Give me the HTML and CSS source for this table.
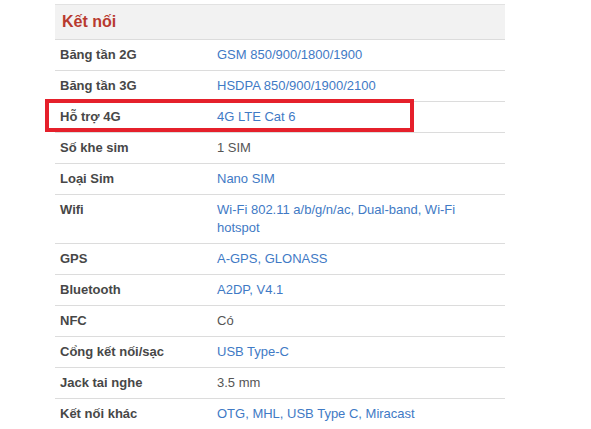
FILE: index.html
```html
<!DOCTYPE html>
<html lang="vi">
<head>
<meta charset="utf-8">
<link rel="stylesheet" href="styles.css">
</head>
<body>
<div class="wrap">
  <table class="specs">
    <colgroup><col class="c1"><col class="c2"></colgroup>
    <thead>
      <tr><th colspan="2" class="head">Kết nối</th></tr>
    </thead>
    <tbody>
      <tr><td class="lbl">Băng tần 2G</td><td class="val link">GSM 850/900/1800/1900</td></tr>
      <tr><td class="lbl">Băng tần 3G</td><td class="val link">HSDPA 850/900/1900/2100</td></tr>
      <tr class="hl"><td class="lbl">Hỗ trợ 4G</td><td class="val link">4G LTE Cat 6</td></tr>
      <tr><td class="lbl">Số khe sim</td><td class="val">1 SIM</td></tr>
      <tr><td class="lbl">Loại Sim</td><td class="val link">Nano SIM</td></tr>
      <tr><td class="lbl">Wifi</td><td class="val link">Wi-Fi 802.11 a/b/g/n/ac, Dual-band, Wi-Fi hotspot</td></tr>
      <tr><td class="lbl">GPS</td><td class="val link">A-GPS, GLONASS</td></tr>
      <tr><td class="lbl">Bluetooth</td><td class="val link">A2DP, V4.1</td></tr>
      <tr><td class="lbl">NFC</td><td class="val">Có</td></tr>
      <tr><td class="lbl">Cổng kết nối/sạc</td><td class="val link">USB Type-C</td></tr>
      <tr><td class="lbl">Jack tai nghe</td><td class="val">3.5 mm</td></tr>
      <tr><td class="lbl">Kết nối khác</td><td class="val link">OTG, MHL, USB Type C, Miracast</td></tr>
    </tbody>
  </table>
  <div class="mark"></div>
</div>
</body>
</html>
```
FILE: styles.css
```css
html, body {
  margin: 0;
  padding: 0;
  background: #fff;
}
body {
  font-family: "Liberation Sans", Arial, sans-serif;
  font-size: 13px;
  overflow: hidden;
}
.wrap {
  position: relative;
  padding: 4px 0 0 55px;
}
.specs {
  width: 450px;
  border-collapse: collapse;
  table-layout: fixed;
}
.c1 { width: 156px; }
.c2 { width: 294px; }
.specs th.head {
  background: #f2f2f2;
  color: #b83a2f;
  font-size: 16px;
  font-weight: bold;
  text-align: left;
  padding: 0 7px;
  height: 35px;
  box-sizing: border-box;
  border-top: 1px solid #e2e2e2;
  border-bottom: 1px solid #dcdcdc;
}
.specs td {
  border-bottom: 1px solid #dcdcdc;
  padding: 6px 6px;
  line-height: 18px;
  vertical-align: top;
}
.specs td.lbl {
  padding-left: 5px;
  color: #474747;
  font-weight: bold;
}
.specs td.val {
  color: #555;
  padding-right: 36px;
}
.specs td.link {
  color: #3f7ac5;
}
.mark {
  position: absolute;
  left: 45px;
  top: 99px;
  width: 361px;
  height: 25px;
  border: 4px solid #e5202b;
}
```
